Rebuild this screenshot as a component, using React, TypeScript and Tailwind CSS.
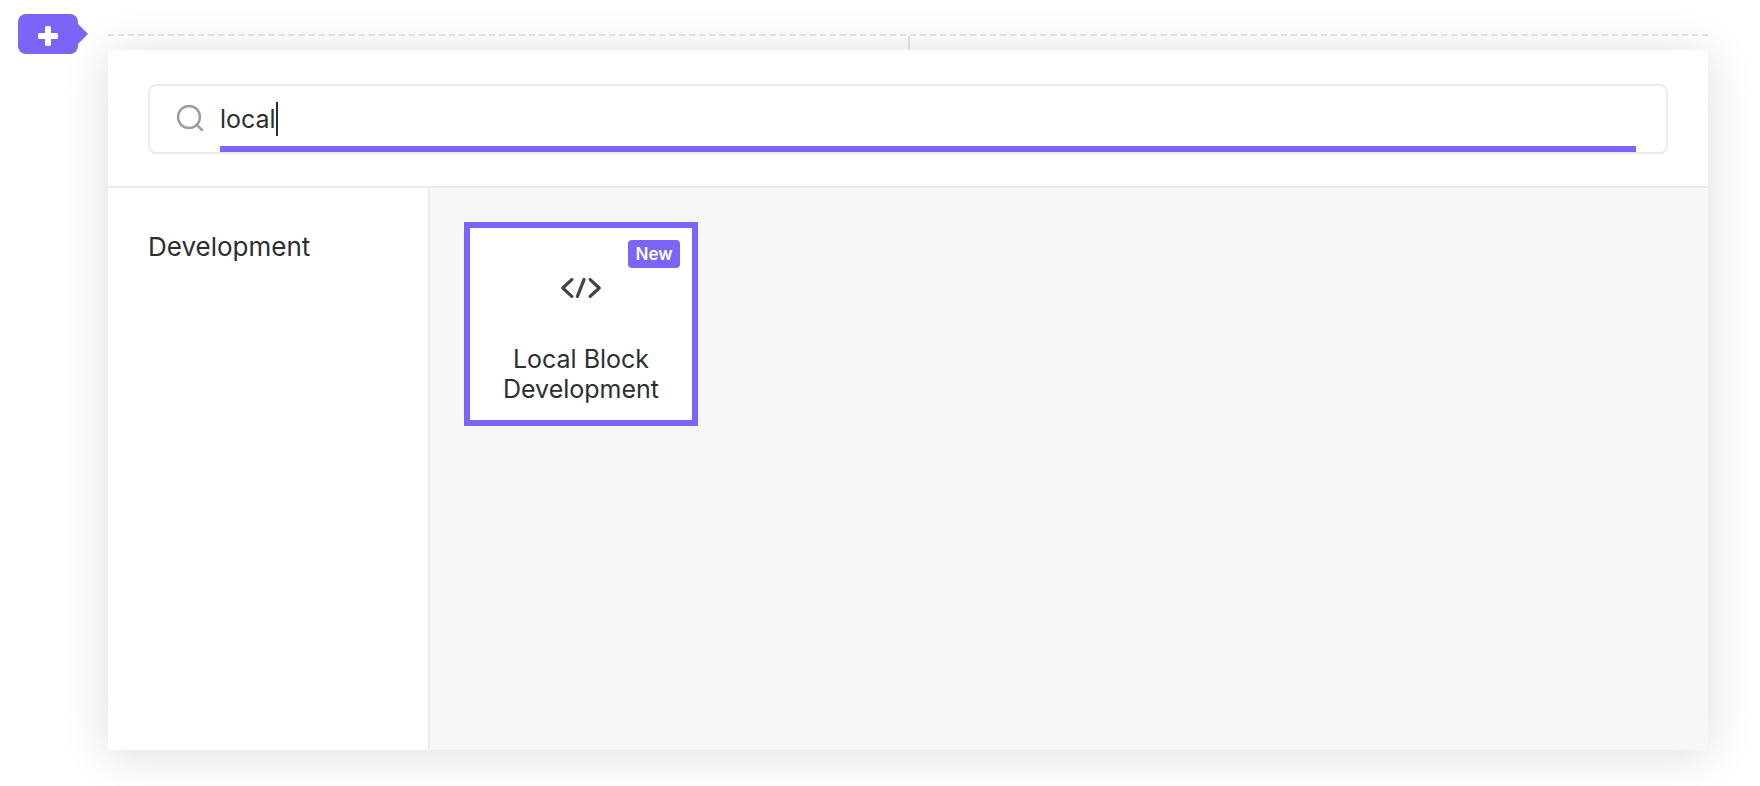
import { useState } from "react";

const blocks = [{ name: "Local Block Development", category: "Development", isNew: true }];

function SearchIcon() {
  return (
    <svg viewBox="0 0 28 28" className="mb-0.5 size-7 shrink-0" fill="none" stroke="#9a9ea3" strokeWidth="2.5" strokeLinecap="round" aria-hidden="true">
      <circle cx="13" cy="13" r="11" />
      <path d="M20.8 20.8 26 26" />
    </svg>
  );
}

function CodeIcon() {
  return (
    <svg viewBox="0 0 40 20" className="h-5 w-10" fill="none" stroke="#414545" strokeWidth="3.2" strokeLinecap="round" strokeLinejoin="round" aria-hidden="true">
      <path d="M10.8 1.6 1.8 10l9 8.4M29.2 1.6l9 8.4-9 8.4M23 1.6 16.4 18.4" />
    </svg>
  );
}

function AddButton() {
  return (
    <button type="button" aria-label="Add block" className="relative z-10 flex h-10 w-15 shrink-0 items-center justify-center rounded-lg bg-[#7c65f6]">
      <svg viewBox="0 0 20 20" className="mt-1 size-5" fill="#fff" aria-hidden="true">
        <rect x="7" y="0" width="6" height="20" rx="1.6" />
        <rect x="0" y="7" width="20" height="6" rx="1.6" />
      </svg>
      <svg viewBox="0 0 10 20" className="absolute top-2.5 left-full h-5 w-2.5" fill="#7c65f6" aria-hidden="true">
        <path d="M0 0 10 10 0 20z" />
      </svg>
    </button>
  );
}

function BlockCard({ name, isNew }: { name: string; isNew: boolean }) {
  return (
    <button type="button" className="relative flex min-h-51 w-58.5 flex-col items-center border-6 border-[#7c65f6] bg-white px-4 pt-12.5 pb-3 text-[#2b2f2f]">
      {isNew && (
        <span className="absolute top-3 right-3 flex h-7 w-13 items-center justify-center rounded bg-[#7c65f6] text-[17px] leading-7 font-semibold text-white">
          New
        </span>
      )}
      <CodeIcon />
      <span className="mt-11.5 text-[25px] leading-[30px]">{name}</span>
    </button>
  );
}

export default function App() {
  const [query, setQuery] = useState("local");

  return (
    <div className="flex items-start overflow-hidden bg-white pt-3.5 pr-13 pb-9 pl-4.5 font-['Inter',sans-serif] text-[#2b2f2f]">
      <AddButton />
      <main className="ml-7.5 min-w-0 flex-1 pt-5">
        <div className="relative z-10 flex h-4 justify-end border-t-2 border-dashed border-[#e0e0e0]">
          <span className="w-1/2 border-l-2 border-solid border-[#dcdcdc]" />
        </div>
        <section className="rounded-br-lg bg-white shadow-[0_4px_48px_rgba(0,0,0,0.14)]">
          <div className="border-b-2 border-[#eaebeb] px-10 pt-8.5 pb-8">
            <label className="flex h-17.5 items-center rounded-lg border-2 border-[#ebebeb] pr-7.5 pl-6.5">
              <SearchIcon />
              <span className="relative ml-4 flex h-full flex-1">
                <input
                  type="text"
                  aria-label="Search blocks"
                  value={query}
                  onChange={(e) => setQuery(e.target.value)}
                  className="w-full border-b-6 border-[#7c65f6] bg-transparent pt-2 text-[25px] outline-none"
                />
                <span className="absolute top-4 left-14 h-8.5 w-0.5 bg-[#2b2f2f]" aria-hidden="true" />
              </span>
            </label>
          </div>
          <div className="flex min-h-140.5">
            <nav className="w-80.5 shrink-0 border-r-2 border-[#eaebeb] px-10 pt-10">
              <a href="#development" className="block text-[26px] leading-[38px]">
                Development
              </a>
            </nav>
            <div id="development" className="flex flex-1 flex-wrap items-start gap-6 rounded-br-lg bg-[#f7f7f7] p-8.5">
              {blocks.map((block) => (
                <BlockCard key={block.name} name={block.name} isNew={block.isNew} />
              ))}
            </div>
          </div>
        </section>
      </main>
    </div>
  );
}
